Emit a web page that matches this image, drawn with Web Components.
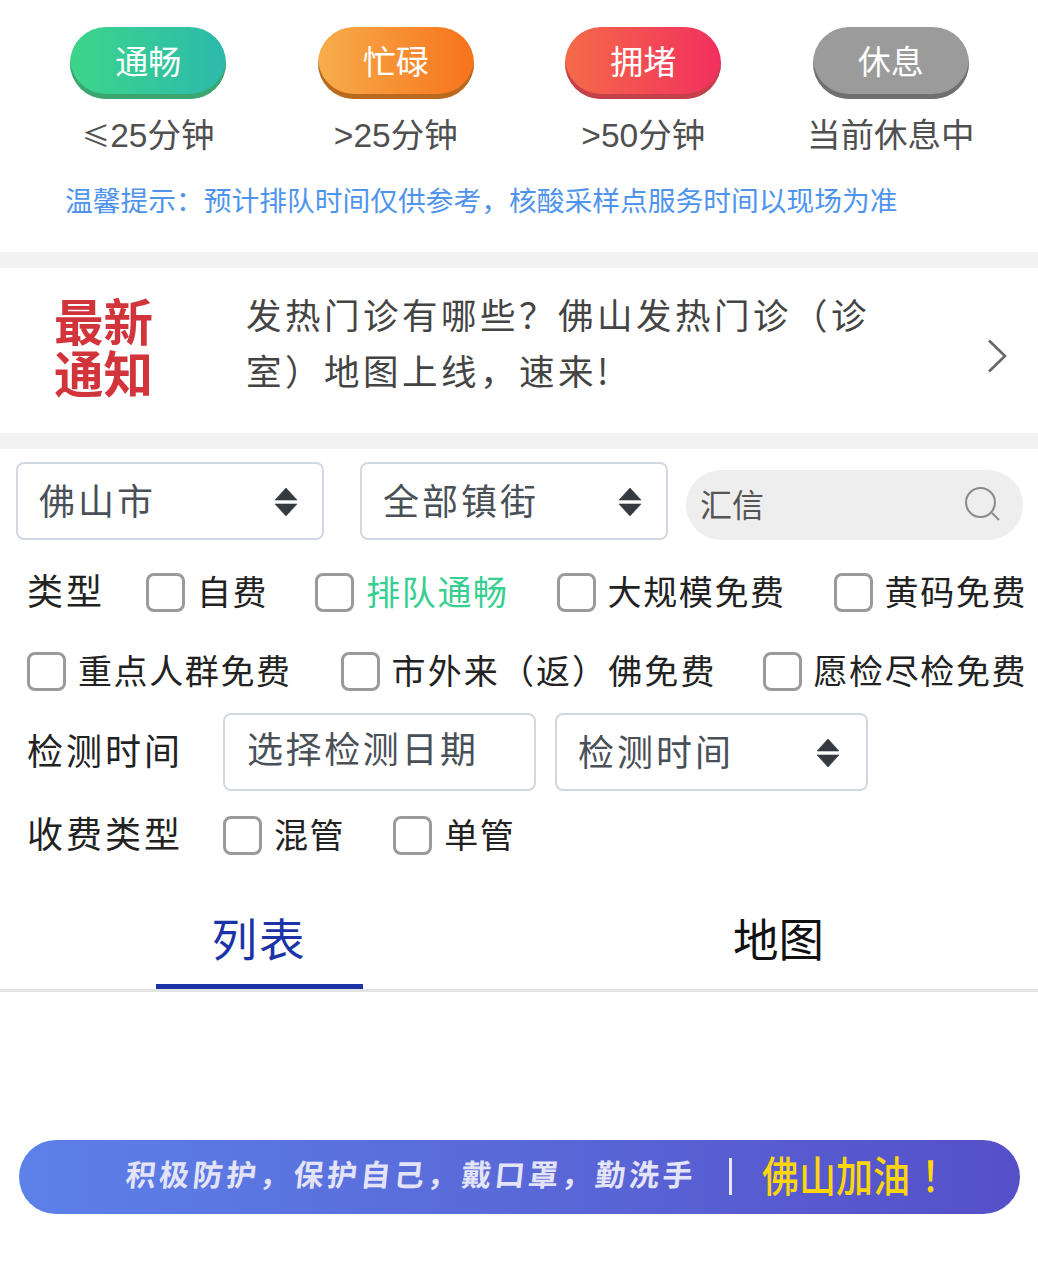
<!DOCTYPE html>
<html lang="zh-CN"><head><meta charset="utf-8"><title>核酸采样点</title>
<style>
html,body{margin:0;padding:0;background:#fff}
body{width:1038px;height:1280px;overflow:hidden;font-family:"Noto Sans CJK SC","Noto Sans",sans-serif}
</style></head><body>
<status-legend>
  <status-item tone="green" label="通畅"><span style='font-family:"Noto Sans CJK SC";font-size:28px;line-height:0'>≤</span>25分钟</status-item>
  <status-item tone="orange" label="忙碌">&gt;25分钟</status-item>
  <status-item tone="red" label="拥堵">&gt;50分钟</status-item>
  <status-item tone="gray" label="休息">当前休息中</status-item>
  <span slot="hint">温馨提示：预计排队时间仅供参考，核酸采样点服务时间以现场为准</span>
</status-legend>
<notice-bar>发热门诊有哪些？佛山发热门诊（诊室）地图上线，速来!</notice-bar>
<filter-panel>
  <filter-row style="--mt:13px;--h:78px">
    <select-box w="308">佛山市</select-box>
    <select-box w="308" style="margin-left:36px">全部镇街</select-box>
    <search-box style="margin-left:18px">汇信</search-box>
  </filter-row>
  <filter-row style="--mt:30px;--h:44px;--pl:27px">
    <row-label style="width:119px">类型</row-label>
    <check-item>自费</check-item>
    <check-item style="margin-left:47px" tone="green">排队通畅</check-item>
    <check-item style="margin-left:48px">大规模免费</check-item>
    <check-item style="margin-left:48px">黄码免费</check-item>
  </filter-row>
  <filter-row style="--mt:35px;--h:44px;--pl:27px">
    <check-item>重点人群免费</check-item>
    <check-item style="margin-left:49px;letter-spacing:2.1px">市外来（返）佛免费</check-item>
    <check-item style="margin-left:46px">愿检尽检免费</check-item>
  </filter-row>
  <filter-row style="--mt:20px;--h:78px;--pl:27px">
    <row-label style="width:196px">检测时间</row-label>
    <text-box w="313">选择检测日期</text-box>
    <select-box w="313" style="margin-left:19px;padding-right:26px">检测时间</select-box>
  </filter-row>
  <filter-row style="--mt:22px;--h:44px;--pl:27px">
    <row-label style="width:196px">收费类型</row-label>
    <check-item>混管</check-item>
    <check-item style="margin-left:48px">单管</check-item>
  </filter-row>
</filter-panel>
<tab-bar><tab-item active>列表</tab-item><tab-item>地图</tab-item></tab-bar>
<slogan-banner></slogan-banner>
<script>
function def(name, css, html){
  customElements.define(name, class extends HTMLElement{
    constructor(){super();this.attachShadow({mode:'open'});}
    connectedCallback(){
      this.shadowRoot.innerHTML='<style>'+css+'</style>'+(typeof html==='function'?html(this):html);
    }
  });
}
const CJK='"Noto Sans CJK SC","Noto Sans",sans-serif';
const LAT='"Liberation Sans","Noto Sans CJK SC",sans-serif';
def('status-legend',`
:host{display:block;height:252px;box-sizing:border-box;padding-top:27px;font-family:${CJK}}
.grid{display:grid;grid-template-columns:repeat(4,247.5px);padding-left:24.5px}
.hint{margin:21px 0 0 65px;height:40px;line-height:40px;font-size:27.75px;color:#4f94ec;white-space:nowrap}
`,`<div class="grid"><slot></slot></div><div class="hint"><slot name="hint"></slot></div>`);
const T={green:['#3dd58a','#2cb9ac','#3aa56f'],orange:['#f7ad4b','#f7731c','#b96a1f'],red:['#f56a48','#f22f5f','#c4404a'],gray:['#9b9b9b','#9b9b9b','#6f6f6f']};
def('status-item',`
:host{display:flex;flex-direction:column;align-items:center}
.pill{width:156px;height:72px;box-sizing:border-box;padding-bottom:6px;border-radius:36px;display:flex;align-items:center;justify-content:center;color:#fff;font-size:33px;line-height:1}
.sub{margin-top:15px;height:44px;line-height:44px;font-size:33.5px;color:#505050;white-space:nowrap;font-family:${LAT}}
`,el=>{const c=T[el.getAttribute('tone')];return `<div class="pill" style="background:linear-gradient(90deg,${c[0]},${c[1]});box-shadow:inset 0 -5px 0 ${c[2]}">${el.getAttribute('label')}</div><div class="sub"><slot></slot></div>`});
def('notice-bar',`
:host{display:flex;align-items:center;height:165px;border-top:16px solid #f2f2f2;border-bottom:16px solid #f2f2f2;font-family:${CJK}}
.title{width:100px;margin-left:54px;padding-bottom:9px;font-size:49.5px;line-height:52px;font-weight:700;color:#d2343c;flex:none}
.text{width:640px;margin-left:92px;padding-bottom:18px;font-size:35.5px;letter-spacing:3.5px;line-height:56px;color:#444;flex:none}
svg{margin:10px 30px 0 auto;flex:none}
`,`<div class="title">最新<br>通知</div><div class="text"><slot></slot></div><svg width="21" height="34" viewBox="0 0 21 34"><path d="M2 1.5 L18 17 L2 32.5" fill="none" stroke="#666" stroke-width="2.6"/></svg>`);
def('filter-panel',`:host{display:flow-root;height:437px;box-sizing:border-box}`,`<slot></slot>`);
def('filter-row',`:host{display:flex;align-items:center;height:var(--h);margin-top:var(--mt);padding-left:var(--pl,16px);white-space:nowrap}`,`<slot></slot>`);
def('row-label',`:host{display:block;flex:none;box-sizing:border-box;padding-bottom:6px;font-size:36px;letter-spacing:3px;color:#222;font-family:${CJK}}`,`<slot></slot>`);
def('select-box',`
:host{display:flex;align-items:center;justify-content:space-between;box-sizing:border-box;height:78px;padding:0 24px 0 21px;border:2px solid #d2d8e1;border-radius:8px;background:#fff;flex:none;font-size:36px;letter-spacing:3px;color:#495057;font-family:${CJK}}
.t{display:block;margin-bottom:4px}
svg{flex:none}
`,el=>{el.style.width=el.getAttribute('w')+'px';return `<span class="t"><slot></slot></span><svg width="24" height="30" viewBox="0 0 24 30"><path d="M12 2 L23 14 H1 Z M1 18 H23 L12 30 Z" fill="#343a40" stroke="#343a40" stroke-width=".6" stroke-linejoin="round"/></svg>`});
def('text-box',`
:host{display:flex;align-items:center;box-sizing:border-box;height:78px;padding:0 0 10px 22px;border:2px solid #d2d8e1;border-radius:8px;flex:none;font-size:36px;letter-spacing:2.6px;color:#495057;font-family:${CJK}}
`,el=>{el.style.width=el.getAttribute('w')+'px';return `<slot></slot>`});
def('search-box',`
:host{display:flex;align-items:center;justify-content:space-between;align-self:flex-end;box-sizing:border-box;width:337px;height:70px;padding:0 22px 0 14px;background:#eeeeee;border-radius:35px;font-size:32px;color:#555;font-family:${CJK}}
.t{display:block;margin-bottom:4px}
`,`<span class="t"><slot></slot></span><svg width="36" height="36" viewBox="0 0 36 36"><circle cx="15.5" cy="15.5" r="14.5" fill="none" stroke="#8a8a8a" stroke-width="2"/><path d="M27 26 L34 33" stroke="#8a8a8a" stroke-width="2" fill="none"/></svg>`);
const TC={green:'#36cf8f'};
def('check-item',`
:host{display:inline-flex;align-items:center;flex:none;font-family:${CJK};font-size:34px;letter-spacing:1.6px;color:#222}
.b{width:39px;height:39px;box-sizing:border-box;border:3px solid #9a9a9a;border-radius:8px;background:#fff;margin-right:12px;flex:none}
.t{display:block;margin-bottom:4px}
`,el=>{const t=el.getAttribute('tone');if(t)el.style.color=TC[t];return `<span class="b"></span><span class="t"><slot></slot></span>`});
def('tab-bar',`:host{display:flex;height:106px;box-sizing:border-box;border-bottom:3px solid #e4e4e4;font-family:${CJK}}`,`<slot></slot>`);
def('tab-item',`
:host{display:flex;flex:1;justify-content:center}
.u{width:207px;height:103px;box-sizing:border-box;display:flex;align-items:center;justify-content:center;padding-top:4px;border-bottom:5px solid transparent;font-size:45.5px;color:#111}
:host([active]) .u{color:#1a34a8;border-bottom-color:#1a34a8;letter-spacing:2px;margin-left:-1px}
`,`<div class="u"><slot></slot></div>`);
def('slogan-banner',`
:host{display:flex;align-items:center;box-sizing:border-box;width:1001px;height:74px;margin:148px 0 0 19px;padding-left:107px;border-radius:37px;background:linear-gradient(90deg,#5c81e8,#5650c8);font-family:${CJK};white-space:nowrap}
.a{display:inline-block;width:567px;font-size:30px;line-height:40px;margin-bottom:8px;color:#e4e4f8;font-weight:700;letter-spacing:3.55px;transform:skewX(-6deg);flex:none}
.d{width:3px;height:37px;background:#e8e8fa;margin-left:36px;margin-bottom:2px;flex:none}
.y{display:inline-block;margin-left:30px;font-size:42px;line-height:50px;margin-bottom:6px;font-weight:500;color:#ffd60a;transform:scaleX(.88);transform-origin:left center;flex:none}
.y b{font-weight:500;margin-left:13px}
`,`<span class="a">积极防护，保护自己，戴口罩，勤洗手</span><i class="d"></i><span class="y">佛山加油<b>！</b></span>`);
</script>
</body></html>
